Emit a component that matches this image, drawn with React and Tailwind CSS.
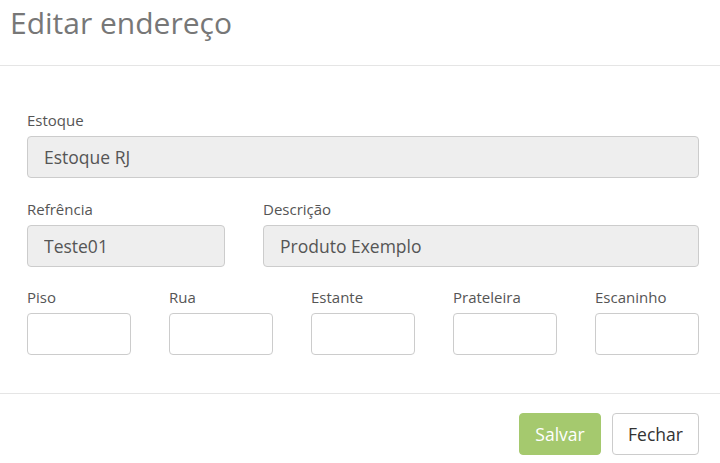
import React from 'react';

const labelCls = 'block text-[15px] font-medium text-[#555] mb-[6px] leading-[20px]';
const roInput = 'w-full h-[42px] rounded-[4px] border border-[#ccc] bg-[#eee] px-[16px] text-[17.5px] text-[#555] outline-none';
const emptyInput = 'w-full h-[42px] rounded-[4px] border border-[#ccc] bg-white px-[12px] text-[17.5px] text-[#555] outline-none';

const slots = ['Piso', 'Rua', 'Estante', 'Prateleira', 'Escaninho'];

export default function App() {
  return (
    <div className="w-[720px] h-[463px] bg-white overflow-hidden" style={{ fontFamily: '"Open Sans", sans-serif' }}>
      {/* header */}
      <div className="h-[66px] border-b border-[#e5e5e5] px-[10px] pt-[3px]">
        <h4 className="text-[30px] font-normal text-[#777] leading-[40px]">Editar endereço</h4>
      </div>

      {/* body */}
      <div className="pl-[27px] pr-[21px] pt-[44px] h-[328px] border-b border-[#e5e5e5]">
        <div className="mb-[21px]">
          <label className={labelCls}>Estoque</label>
          <input className={roInput} readOnly value="Estoque RJ" />
        </div>

        <div className="flex gap-[38px] mb-[20px]">
          <div className="w-[198px]">
            <label className={labelCls}>Refrência</label>
            <input className={roInput} readOnly value="Teste01" />
          </div>
          <div className="flex-1">
            <label className={labelCls}>Descrição</label>
            <input className={roInput} readOnly value="Produto Exemplo" />
          </div>
        </div>

        <div className="grid grid-cols-5 gap-[38px]">
          {slots.map((s) => (
            <div key={s}>
              <label className={labelCls}>{s}</label>
              <input className={emptyInput} />
            </div>
          ))}
        </div>
      </div>

      {/* footer */}
      <div className="flex justify-end gap-[11px] pr-[21px] pt-[19px]">
        <button className="h-[42px] w-[82px] rounded-[4px] bg-[#a5c96e] border border-[#a5c96e] text-white text-[17.5px]">Salvar</button>
        <button className="h-[42px] w-[87px] rounded-[4px] bg-white border border-[#ccc] text-[#333] text-[17.5px]">Fechar</button>
      </div>
    </div>
  );
}
